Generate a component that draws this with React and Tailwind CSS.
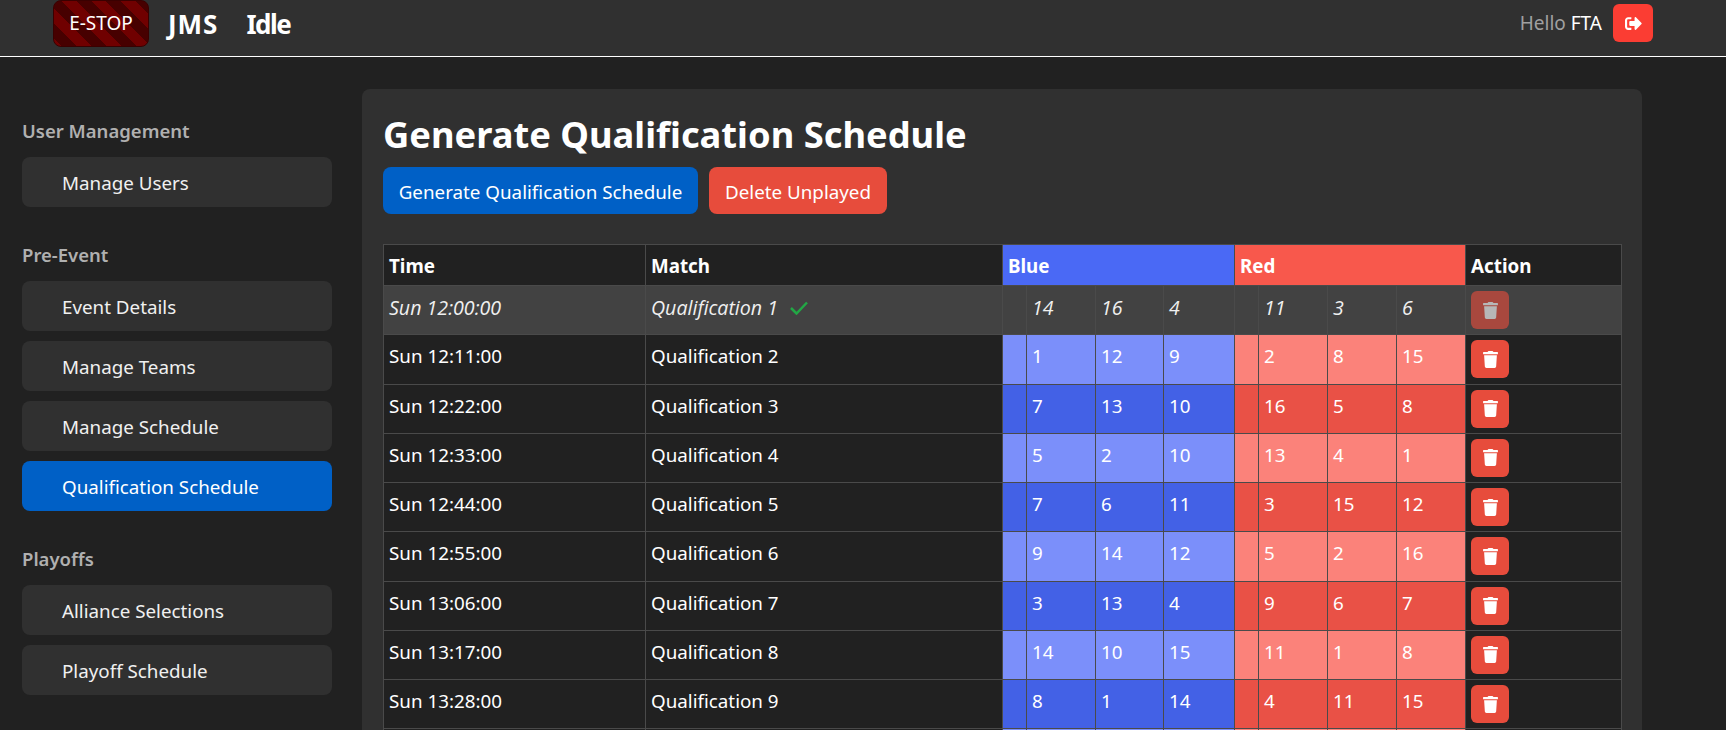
import React from 'react';
import { FaTrash, FaSignOutAlt } from 'react-icons/fa';

const sections = [
  { title: 'User Management', items: ['Manage Users'] },
  { title: 'Pre-Event', items: ['Event Details', 'Manage Teams', 'Manage Schedule', 'Qualification Schedule'] },
  { title: 'Playoffs', items: ['Alliance Selections', 'Playoff Schedule'] },
];

const matches = [
  { time: 'Sun 12:00:00', name: 'Qualification 1', blue: [14, 16, 4], red: [11, 3, 6], played: true },
  { time: 'Sun 12:11:00', name: 'Qualification 2', blue: [1, 12, 9], red: [2, 8, 15] },
  { time: 'Sun 12:22:00', name: 'Qualification 3', blue: [7, 13, 10], red: [16, 5, 8] },
  { time: 'Sun 12:33:00', name: 'Qualification 4', blue: [5, 2, 10], red: [13, 4, 1] },
  { time: 'Sun 12:44:00', name: 'Qualification 5', blue: [7, 6, 11], red: [3, 15, 12] },
  { time: 'Sun 12:55:00', name: 'Qualification 6', blue: [9, 14, 12], red: [5, 2, 16] },
  { time: 'Sun 13:06:00', name: 'Qualification 7', blue: [3, 13, 4], red: [9, 6, 7] },
  { time: 'Sun 13:17:00', name: 'Qualification 8', blue: [14, 10, 15], red: [11, 1, 8] },
  { time: 'Sun 13:28:00', name: 'Qualification 9', blue: [8, 1, 14], red: [4, 11, 15] },
];

const cell = 'border border-[#4a4a4a] px-[5px] text-left';
const headCell = `${cell} pt-[2px] font-bold`;
const bodyCell = `${cell} pt-[8px] align-top leading-[27px]`;

const Navbar = () => (
  <nav className="flex h-[57px] items-start border-b border-white bg-[#303030] pl-[53px] pr-[73px]">
    <button className="h-[47px] w-[96px] rounded-lg border border-[#3a0000] bg-[repeating-linear-gradient(45deg,#700000_0px,#700000_5.5px,#470000_5.5px,#470000_16px,#700000_16px,#700000_21px)] text-[19px] text-white">
      E-STOP
    </button>
    <span className="ml-[19px] mt-[4px] text-[26px] leading-[40px] font-bold tracking-[1px] text-white">JMS</span>
    <span className="ml-[28px] mt-[4px] text-[26px] leading-[40px] font-bold tracking-[-1.5px] text-white">Idle</span>
    <div className="ml-auto mt-[4px] flex items-center">
      <span className="text-[19px] text-[#a0a0a0]">
        Hello <span className="text-white">FTA</span>
      </span>
      <button className="ml-[11px] flex h-[38px] w-[40px] items-center justify-center rounded-md bg-[#fb3d33] text-white">
        <FaSignOutAlt size={17} />
      </button>
    </div>
  </nav>
);

const Sidebar = () => (
  <aside className="w-[362px] shrink-0 px-[22px] pt-[61px]">
    {sections.map((section) => (
      <div key={section.title} className="mb-[35px]">
        <h3 className="mb-[13px] text-[18.5px] leading-[26px] font-semibold text-[#b0b0b0]">{section.title}</h3>
        <div className="flex w-[310px] flex-col gap-[10px]">
          {section.items.map((item) => (
            <div
              key={item}
              className={`flex h-[50px] items-center rounded-lg pl-[40px] pt-[3px] text-[18.8px] text-[#f0f0f0] ${
                item === 'Qualification Schedule' ? 'bg-[#0060c6] text-white' : 'bg-[#303030]'
              }`}
            >
              {item}
            </div>
          ))}
        </div>
      </div>
    ))}
  </aside>
);

const TeamCells = ({ teams, color }) => (
  <>
    <td className={`${bodyCell} ${color}`}></td>
    {teams.map((team, index) => (
      <td key={index} className={`${bodyCell} ${color}`}>
        {team}
      </td>
    ))}
  </>
);

const MatchRow = ({ match, index }) => {
  const blue = match.played ? '' : index % 2 === 1 ? 'bg-[#7b8ffa]' : 'bg-[#4361e6]';
  const red = match.played ? '' : index % 2 === 1 ? 'bg-[#fb827a]' : 'bg-[#e95146]';

  return (
    <tr className={`h-[49.25px] ${match.played ? "bg-[#424242] font-['Open_Sans',sans-serif] text-[19.6px] text-[#f0f0f0] italic" : ''}`}>
      <td className={bodyCell}>{match.time}</td>
      <td className={bodyCell}>
        <span className="flex items-center gap-[12px]">
          {match.name}
          {match.played && (
            <svg width="18" height="14" viewBox="0 0 18 14" fill="none" className="text-[#22a745]">
              <path d="M1 7 L6.5 12.5 L17 1.5" stroke="currentColor" strokeWidth="2.5" />
            </svg>
          )}
        </span>
      </td>
      <TeamCells teams={match.blue} color={blue} />
      <TeamCells teams={match.red} color={red} />
      <td className={`${cell} pt-[5px] align-top`}>
        <button
          className={`flex h-[38px] w-[38px] items-center justify-center rounded-md bg-[#e74c3c] text-white ${
            match.played ? 'opacity-[0.62]' : ''
          }`}
        >
          <FaTrash size={17} />
        </button>
      </td>
    </tr>
  );
};

const ScheduleTable = () => (
  <table className="w-[1238px] table-fixed border-collapse bg-[#212121] text-[18.8px] text-white">
    <colgroup>
      {[262, 357, 24, 69, 68, 71, 24, 69, 69, 69, 156].map((width, index) => (
        <col key={index} style={{ width }} />
      ))}
    </colgroup>
    <thead>
      <tr className="h-[41px]">
        <th className={headCell}>Time</th>
        <th className={headCell}>Match</th>
        <th colSpan={4} className={`${headCell} bg-[#4a69f5]`}>Blue</th>
        <th colSpan={4} className={`${headCell} bg-[#f8584c]`}>Red</th>
        <th className={headCell}>Action</th>
      </tr>
    </thead>
    <tbody>
      {matches.map((match, index) => (
        <MatchRow key={match.name} match={match} index={index} />
      ))}
      <MatchRow match={{ time: '', name: '', blue: ['', '', ''], red: ['', '', ''] }} index={9} />
    </tbody>
  </table>
);

export default function App() {
  return (
    <div className="h-[730px] overflow-hidden bg-[#212121] font-['Noto_Sans',sans-serif] text-white">
      <Navbar />
      <div className="flex">
        <Sidebar />
        <main className="mt-[32px] w-[1280px] shrink-0 rounded-lg bg-[#303030] pl-[21px] pt-[14px]">
          <h1 className="h-[64px] text-[36.3px] leading-[62px] font-bold text-white">Generate Qualification Schedule</h1>
          <div className="mb-[30px] flex gap-[11px]">
            <button className="h-[47px] w-[315px] rounded-lg bg-[#0060c6] pt-[3px] text-[18.8px] text-white">Generate Qualification Schedule</button>
            <button className="h-[47px] w-[178px] rounded-lg bg-[#e74c3c] pt-[3px] text-[18.8px] text-white">Delete Unplayed</button>
          </div>
          <ScheduleTable />
        </main>
      </div>
    </div>
  );
}
